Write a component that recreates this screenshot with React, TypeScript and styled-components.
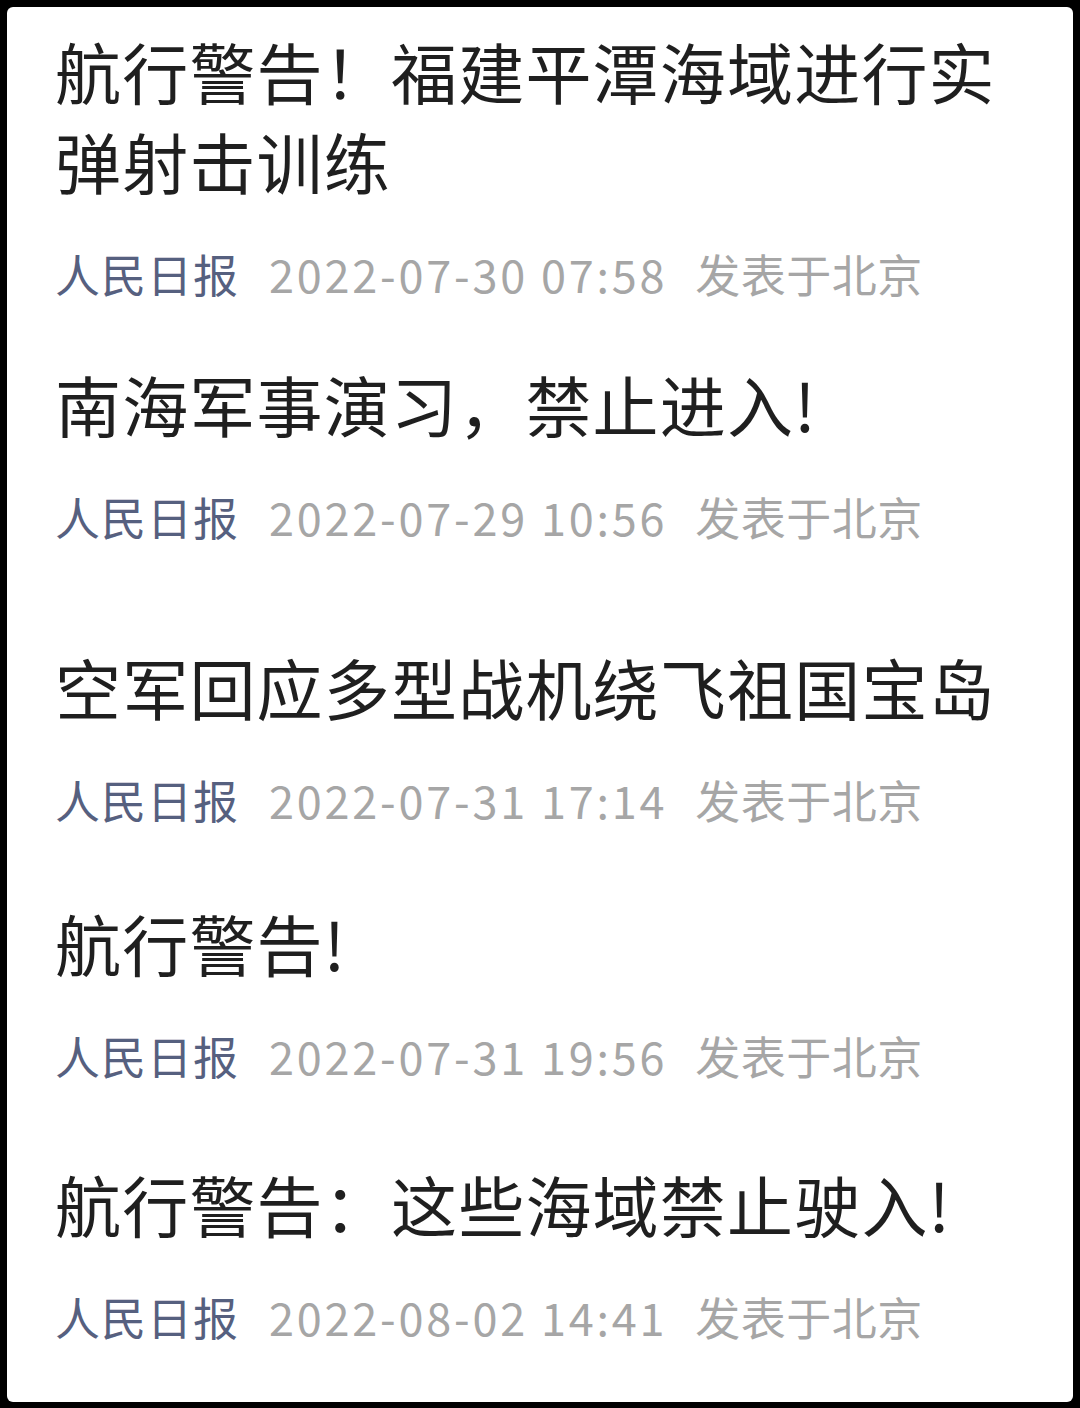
import React from "react";
import styled, { createGlobalStyle } from "styled-components";

const GlobalStyle = createGlobalStyle`
  html, body {
    margin: 0;
    padding: 0;
    background: #000;
  }
  body {
    font-family: "Noto Sans CJK SC", "Noto Sans", sans-serif;
  }
`;

const Frame = styled.div`
  width: 1080px;
  height: 1408px;
  box-sizing: border-box;
  padding: 7px 7px 6px 7px;
  background: #000;
`;

const Card = styled.div`
  height: 100%;
  box-sizing: border-box;
  background: #fff;
  border-radius: 6px;
  padding: 18px 30px 0 48px;
  display: flex;
  flex-direction: column;
`;

const Item = styled.div<{ $gap: number }>`
  display: flex;
  flex-direction: column;
  margin-bottom: ${(p) => p.$gap}px;
`;

const Title = styled.div`
  font-size: 66px;
  line-height: 90px;
  color: #1f1f1f;
  letter-spacing: 1.2px;
`;

const Meta = styled.div`
  display: flex;
  align-items: center;
  margin-top: 39px;
  height: 60px;
  font-size: 45px;
  line-height: 60px;
  white-space: nowrap;
`;

const Source = styled.span`
  color: #56607f;
  letter-spacing: 1px;
`;

const Time = styled.span`
  color: #a6a6a6;
  margin-left: 30px;
  letter-spacing: 2.8px;
`;

const Place = styled.span`
  color: #a6a6a6;
  margin-left: 28px;
  letter-spacing: 0.5px;
`;

const news = [
  { title: "航行警告！福建平潭海域进行实弹射击训练", time: "2022-07-30 07:58", gap: 54 },
  { title: "南海军事演习，禁止进入!", time: "2022-07-29 10:56", gap: 94 },
  { title: "空军回应多型战机绕飞祖国宝岛", time: "2022-07-31 17:14", gap: 67 },
  { title: "航行警告!", time: "2022-07-31 19:56", gap: 72 },
  { title: "航行警告：这些海域禁止驶入!", time: "2022-08-02 14:41", gap: 0 },
];

export default function App() {
  return (
    <>
      <GlobalStyle />
      <Frame>
        <Card>
          {news.map((n) => (
            <Item key={n.time} $gap={n.gap}>
              <Title>{n.title}</Title>
              <Meta>
                <Source>人民日报</Source>
                <Time>{n.time}</Time>
                <Place>发表于北京</Place>
              </Meta>
            </Item>
          ))}
        </Card>
      </Frame>
    </>
  );
}
